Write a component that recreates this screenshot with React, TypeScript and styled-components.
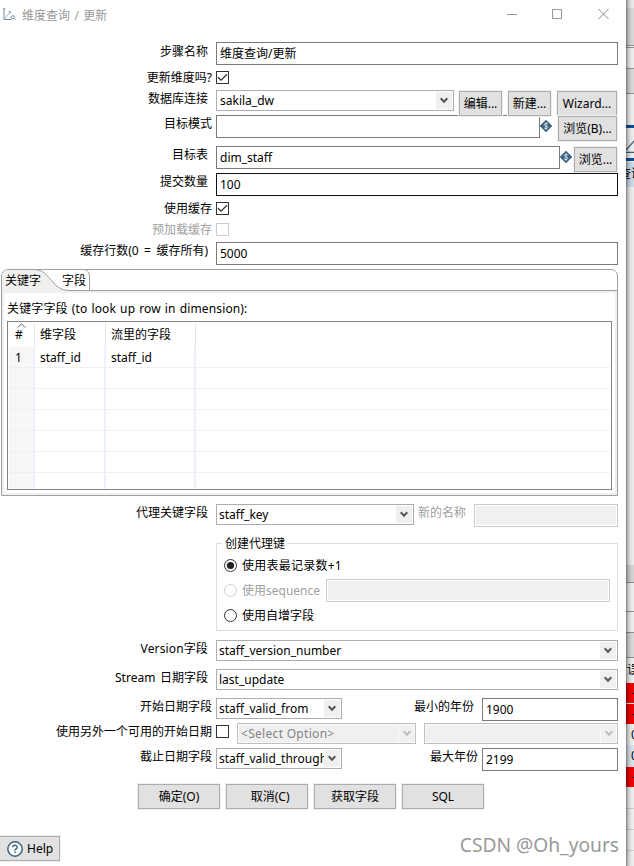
import React from "react";
import styled, { createGlobalStyle, css } from "styled-components";

const Global = createGlobalStyle`
  * { box-sizing: border-box; }
  body {
    margin: 0;
    background: #fff;
    overflow: hidden;
    font-family: "Noto Sans", "Noto Sans CJK SC", sans-serif;
    font-size: 12px;
    line-height: 16px;
    color: #000;
  }
`;

const Screen = styled.div`
  display: flex;
  width: 634px;
  height: 866px;
  overflow: hidden;
`;

const Dialog = styled.main`
  width: 626px;
  height: 866px;
  flex: none;
  background: #fff;
  position: relative;
`;

const TitleBar = styled.header`
  height: 42px;
  display: flex;
  align-items: flex-start;
  padding: 7px 17px 0 3px;
  color: #999;
  & > svg { flex: none; }
`;

const Title = styled.h1`
  flex: 1;
  margin: 1px 0 0 4px;
  font-size: 12px;
  font-weight: 400;
  word-spacing: 1.3px;
  white-space: pre;
`;

const WindowButtons = styled.div`
  display: flex;
  gap: 35px;
  padding-top: 1px;
`;

const Row = styled.div<{ $h: number }>`
  display: flex;
  align-items: flex-start;
  height: ${(p) => p.$h}px;
`;

const Label = styled.label<{ $end?: number; $top?: number; $muted?: boolean; $ls?: number; $ws?: number }>`
  flex: none;
  width: 216px;
  padding-right: ${(p) => 216 - (p.$end ?? 208)}px;
  margin-top: ${(p) => p.$top ?? 1}px;
  text-align: right;
  white-space: pre;
  letter-spacing: ${(p) => p.$ls ?? 0}px;
  word-spacing: ${(p) => p.$ws ?? 0}px;
  color: ${(p) => (p.$muted ? "#a0a0a0" : "#000")};
`;

const SideLabel = styled(Label)<{ $w: number }>`
  width: ${(p) => p.$w}px;
  padding-right: 0;
`;

const Field = styled.div<{ $w: number; $focus?: boolean; $off?: boolean; $ml?: number; $mt?: number }>`
  flex: none;
  width: ${(p) => p.$w}px;
  height: 23px;
  margin-left: ${(p) => p.$ml ?? 0}px;
  margin-top: ${(p) => p.$mt ?? 0}px;
  border: 1px solid ${(p) => (p.$focus ? "#111" : p.$off ? "#ccc" : "#7a7a7a")};
  padding: 3px 0 0 3px;
  white-space: pre;
  ${(p) => p.$off && css`
    background: #f0f0f0;
    box-shadow: inset 0 0 0 1px #fff;
  `}
`;

const ComboBox = styled.div<{ $w: number; $off?: boolean; $ml?: number; $pad?: number }>`
  flex: none;
  display: flex;
  width: ${(p) => p.$w}px;
  height: 21px;
  margin-left: ${(p) => p.$ml ?? 0}px;
  border: 1px solid ${(p) => (p.$off ? "#bfbfbf" : "#abadb3")};
  padding: 1px 1px 1px ${(p) => p.$pad ?? 2}px;
  color: ${(p) => (p.$off ? "#838383" : "#000")};
  background: ${(p) => (p.$off ? "#f0f0f0" : "#fff")};
  ${(p) => p.$off && css`box-shadow: inset 0 0 0 1px #fafafa;`}
`;

const ComboText = styled.span<{ $ls?: number }>`
  flex: 1;
  min-width: 0;
  overflow: hidden;
  white-space: pre;
  line-height: 18px;
  letter-spacing: ${(p) => p.$ls ?? 0}px;
`;

const ComboArrow = styled.span<{ $off?: boolean }>`
  flex: none;
  width: 16px;
  height: 17px;
  display: grid;
  place-items: center;
  background: #f0f0f0;
  ${(p) => p.$off && css`border-left: 1px solid #fafafa;`}
`;

const Button = styled.button<{ $w: number; $ml?: number; $mt?: number }>`
  flex: none;
  display: flex;
  align-items: center;
  justify-content: center;
  width: ${(p) => p.$w}px;
  height: 25px;
  margin: ${(p) => p.$mt ?? 0}px 0 0 ${(p) => p.$ml ?? 0}px;
  padding: 0;
  border: 1px solid #adadad;
  background: #e1e1e1;
  box-shadow: 0 0 0 1px #f0f0f0;
  font: inherit;
  color: #000;
  white-space: pre;
  position: relative;
`;

const Check = styled.span<{ $off?: boolean; $mt?: number }>`
  flex: none;
  width: 13px;
  height: 13px;
  margin-top: ${(p) => p.$mt ?? 0}px;
  border: 1px solid ${(p) => (p.$off ? "#ccc" : "#333")};
  svg { display: block; }
`;

const VariableMark = styled.span`
  flex: none;
  width: 12px;
  height: 12px;
  margin-top: 5px;
  svg { display: block; }
`;

const TabFolder = styled.section`
  width: 617px;
  height: 227px;
  margin-left: 1px;
  border: 1px solid #a0a0a0;
  border-radius: 7px 7px 0 0;
`;

const TabStrip = styled.div`
  display: flex;
  height: 21px;
  border-bottom: 1px solid #a0a0a0;
  position: relative;
`;

const TabShape = styled.svg`
  position: absolute;
  left: -1px;
  top: -1px;
`;

const Tab = styled.span<{ $w: number }>`
  position: relative;
  width: ${(p) => p.$w}px;
  padding: 3px 0 0 3px;
  white-space: pre;
`;

const TabBody = styled.div`
  height: 204px;
  border: solid #f0f0f0;
  border-width: 2px;
  padding: 8px 3px 0;
`;

const Caption = styled.div`
  height: 20px;
  white-space: pre;
  letter-spacing: 0.14px;
  word-spacing: 0.8px;
`;

const Table = styled.div`
  height: 169px;
  border: 1px solid #82838a;
  padding: 1px;
  overflow: hidden;
`;

const TableRow = styled.div<{ $head?: boolean }>`
  display: grid;
  grid-template-columns: 26px 71px 90px 1fr;
  height: ${(p) => (p.$head ? 24 : 21)}px;
  border-bottom: ${(p) => (p.$head ? 0 : 1)}px solid #f0f0f0;
  & > span {
    position: relative;
    padding: ${(p) => (p.$head ? 4 : 3)}px 0 0 5px;
    border-right: ${(p) => (p.$head ? "1px solid #e5e5e5" : "2px solid #ebf1fd")};
    white-space: pre;
  }
  & > span:first-child {
    padding-left: 6px;
    background: ${(p) => (p.$head ? "#fff" : "#f7f7f7")};
  }
  & > span:last-child { border-right: 0; }
`;

const SortMark = styled.svg`
  position: absolute;
  left: 8px;
  top: 0;
`;

const Group = styled.fieldset`
  width: 402px;
  height: 96px;
  margin: 0 0 0 216px;
  padding: 0;
  border: 0;
  display: flex;
  flex-direction: column;
  position: relative;
  &::before {
    content: "";
    position: absolute;
    inset: 7px 0 1px 0;
    border: 1px solid #dcdcdc;
  }
`;

const Legend = styled.div`
  position: relative;
  flex: none;
  width: 64px;
  height: 22px;
  margin-left: 6px;
`;

const LegendText = styled.span`
  display: block;
  width: 65px;
  height: 16px;
  padding-left: 3px;
  white-space: nowrap;
  background: #fff;
`;

const RadioRow = styled.div<{ $off?: boolean }>`
  position: relative;
  display: flex;
  flex: none;
  align-items: flex-start;
  height: 25px;
  padding: 0 0 0 8px;
  color: ${(p) => (p.$off ? "#a0a0a0" : "#000")};
  & > svg { margin-top: 1px; flex: none; }
`;

const RadioText = styled.span<{ $w: number; $ls?: number }>`
  flex: none;
  width: ${(p) => p.$w}px;
  margin-left: 5px;
  white-space: pre;
  letter-spacing: ${(p) => p.$ls ?? 0}px;
`;

const Actions = styled.div`
  display: flex;
  gap: 6px;
  padding: 0 0 0 138px;
  height: 52px;
`;

const HelpButton = styled(Button)`
  justify-content: flex-start;
  gap: 4px;
  padding-left: 7px;
`;

const Watermark = styled.div`
  position: absolute;
  right: 7px;
  top: 832px;
  font-size: 19.2px;
  line-height: 26px;
  color: #999;
  white-space: pre;
`;

const Backdrop = styled.aside`
  width: 8px;
  height: 866px;
  position: relative;
  overflow: hidden;
  &::after {
    content: "";
    position: absolute;
    inset: 0;
    background: linear-gradient(90deg, rgba(0,0,0,.5) 0, rgba(0,0,0,.3) 1.5px, rgba(0,0,0,.13) 4px, rgba(0,0,0,.05) 8px);
  }
`;

const Band = styled.div<{ $h: number; $c: string }>`
  height: ${(p) => p.$h}px;
  background: ${(p) => p.$c};
  overflow: hidden;
  white-space: nowrap;
  line-height: ${(p) => Math.min(p.$h, 24)}px;
  svg { display: block; }
`;

const Peek = styled.span<{ $shift: number }>`
  display: block;
  margin-left: ${(p) => p.$shift}px;
`;

const Chevron = ({ off }: { off?: boolean }) => (
  <svg width="8" height="7" viewBox="0 0 8 7">
    <path d="M0.7 1.3 L4 4.8 L7.3 1.3" fill="none" stroke={off ? "#bbb" : "#555"} strokeWidth="2" />
  </svg>
);

const Combo = ({ w, text = "", off, ml, pad, ls }: { w: number; text?: string; off?: boolean; ml?: number; pad?: number; ls?: number }) => (
  <ComboBox $w={w} $off={off} $ml={ml} $pad={pad}>
    <ComboText $ls={ls}>{text}</ComboText>
    <ComboArrow $off={off}><Chevron off={off} /></ComboArrow>
  </ComboBox>
);

const CheckBox = ({ on, off, mt }: { on?: boolean; off?: boolean; mt?: number }) => (
  <Check $off={off} $mt={mt}>
    {on && (
      <svg width="11" height="11" viewBox="0 0 11 11">
        <path d="M1 5.2 L4 8.2 L10 2.2" fill="none" stroke="#333" strokeWidth="1.3" />
      </svg>
    )}
  </Check>
);

const Radio = ({ on, off }: { on?: boolean; off?: boolean }) => (
  <svg width="13" height="13" viewBox="0 0 13 13">
    <circle cx="6.5" cy="6.5" r="6" fill="#fff" stroke={off ? "#ccc" : "#333"} />
    {on && <circle cx="6.5" cy="6.5" r="3.6" fill="#222" />}
  </svg>
);

const Variable = () => (
  <VariableMark>
    <svg width="12" height="12" viewBox="0 0 12 12">
      <path d="M6 0 L12 6 L6 12 L0 6 Z" fill="#3d6480" stroke="#3d6480" strokeWidth="0.6" />
      <path d="M7.9 4.2 C7.3 3.1 4.3 3 4.3 4.6 C4.3 6.2 7.8 5.5 7.8 7.3 C7.8 8.9 4.6 8.9 4 7.6 M6 2.2 V9.8" fill="none" stroke="#dfe8ee" strokeWidth="0.9" />
    </svg>
  </VariableMark>
);

const bands: [number, string, string?, number?][] = [
  [8, "#fafafa"], [37, "#e8e8e8"], [1, "#a0a0a0"], [1, "#fff"], [1, "#a0a0a0"],
  [20, "#fff"], [1, "#a0a0a0"], [24, "#e8e8e8"], [1, "#a0a0a0"], [31, "#fff"], [3, "#0a559c"], [12, "#fff"],
];

const lowerBands: [number, string, string?, number?][] = [
  [5, "#fff"], [3, "#0a559c"], [1, "#fff"], [25, "#dbe9f7", "查询", -7],
  [378, "#fdfdfd"], [17, "#e2e2e2"], [1, "#999"], [28, "#fff"], [1, "#999"], [20, "#fff"], [1, "#999"],
  [24, "#e8e8e8"], [1, "#999"], [25, "#fff", "错误", -11], [20, "#f00", "-", 5], [1, "#fff"], [20, "#f00", "-", 5],
  [21, "#fff", "0", 5], [22, "#e8f2fc", "0", 5], [20, "#f00", "-", 5],
  [21, "#fff"], [1, "#ddd"], [20, "#fff"], [1, "#ddd"], [20, "#fff"], [1, "#ddd"], [20, "#fff"],
];

const Bands = ({ items }: { items: [number, string, string?, number?][] }) => (
  <>
    {items.map(([h, c, text, shift], i) => (
      <Band key={i} $h={h} $c={c}>{text && <Peek $shift={shift ?? 0}>{text}</Peek>}</Band>
    ))}
  </>
);

export default function App() {
  return (
    <Screen>
      <Global />
      <Dialog>
        <TitleBar>
          <svg width="15" height="15" viewBox="0 0 15 15" fill="none" stroke="#8195a8">
            <path d="M1 1 V12.5 H8.500" strokeWidth="1.1" />
            <path d="M1 12.5 L7 5" stroke="#9fb0bf" />
            <path d="M0 2.500 L1 1 L2.500 2.500 M5.500 4.500 H7.500 V6.500" strokeWidth="0.8" />
            <circle cx="9.800" cy="10.200" r="1.6" />
            <path d="M11 11.400 L12.500 13" />
          </svg>
          <Title>维度查询 / 更新</Title>
          <WindowButtons>
            <svg width="11" height="11"><path d="M1 6.5 H11" stroke="#999" /></svg>
            <svg width="11" height="11"><rect x="0.5" y="1.5" width="9" height="9" fill="none" stroke="#999" /></svg>
            <svg width="11" height="11"><path d="M0.5 1 L10.5 11 M10.5 1 L0.5 11" stroke="#888" /></svg>
          </WindowButtons>
        </TitleBar>

        <Row $h={29}><Label $top={2}>步骤名称</Label><Field $w={402}>维度查询/更新</Field></Row>
        <Row $h={19}><Label $end={212} $top={-1}>更新维度吗?</Label><CheckBox on /></Row>
        <Row $h={25}>
          <Label $top={1}>数据库连接</Label>
          <Combo w={238} text="sakila_dw" pad={3} />
          <Button $w={43} $ml={5} $mt={1}>编辑...</Button>
          <Button $w={43} $ml={6} $mt={1}>新建...</Button>
          <Button $w={60} $ml={6} $mt={1}>Wizard...</Button>
        </Row>
        <Row $h={31}>
          <Label $end={212} $top={1}>目标模式</Label><Field $w={324} /><Variable />
          <Button $w={59} $ml={6} $mt={1}>浏览(B)...</Button>
        </Row>
        <Row $h={27}>
          <Label>目标表</Label><Field $w={344}>dim_staff</Field><Variable />
          <Button $w={43} $ml={2} $mt={1}>浏览...</Button>
        </Row>
        <Row $h={29}><Label>提交数量</Label><Field $w={402} $focus>100</Field></Row>
        <Row $h={21}><Label $end={212} $top={-1}>使用缓存</Label><CheckBox on /></Row>
        <Row $h={19}><Label $end={212} $top={-1} $muted>预加载缓存</Label><CheckBox off /></Row>
        <Row $h={27}><Label $ws={2.3}>缓存行数(0 = 缓存所有)</Label><Field $w={402}>5000</Field></Row>

        <TabFolder>
          <TabStrip>
            <TabShape width="92" height="24" viewBox="0 0 92 24" fill="none" stroke="#a0a0a0">
              <path d="M1 24 V7 Q1.5 1 8 1 H34 C50 1 50 21.5 68 21.5 V24 Z" fill="#f0f0f0" stroke="none" />
              <path d="M34 0.5 C50 1 50 21.5 68 21.5 M83 0.5 Q88.500 1 88.500 8 V21.500" />
            </TabShape>
            <Tab $w={57}>关键字</Tab>
            <Tab $w={35}>字段</Tab>
          </TabStrip>
          <TabBody>
            <Caption>关键字字段 (to look up row in dimension):</Caption>
            <Table>
              <TableRow $head>
                <span><SortMark width="9" height="5"><path d="M0.500 4.500 L4.500 1 L8.500 4.500" fill="none" stroke="#666" /></SortMark>#</span>
                <span>维字段</span><span>流里的字段</span><span />
              </TableRow>
              <TableRow><span>1</span><span>staff_id</span><span>staff_id</span><span /></TableRow>
              {[0, 1, 2, 3, 4, 5].map((i) => (
                <TableRow key={i}><span /><span /><span /><span /></TableRow>
              ))}
            </Table>
          </TabBody>
        </TabFolder>

        <Row $h={8} />
        <Row $h={32}>
          <Label $top={1}>代理关键字段</Label><Combo w={198} text="staff_key" />
          <SideLabel $w={52} $top={1} $muted>新的名称</SideLabel><Field $w={144} $ml={8} $off />
        </Row>

        <Group>
          <Legend><LegendText>创建代理键</LegendText></Legend>
          <RadioRow><Radio on /><RadioText $w={150} $ls={0.25}>使用表最记录数+1</RadioText></RadioRow>
          <RadioRow $off>
            <Radio off /><RadioText $w={84}>使用sequence</RadioText>
            <Field $w={284} $off $mt={-4} />
          </RadioRow>
          <RadioRow><Radio /><RadioText $w={150}>使用自增字段</RadioText></RadioRow>
        </Group>

        <Row $h={8} />
        <Row $h={29}><Label $ls={0.14}>Version字段</Label><Combo w={402} text="staff_version_number" /></Row>
        <Row $h={29}><Label $ws={1.5}>Stream 日期字段</Label><Combo w={402} text="last_update" /></Row>
        <Row $h={25}>
          <Label $end={212}>开始日期字段</Label><Combo w={126} text="staff_valid_from" />
          <SideLabel $w={132}>最小的年份</SideLabel><Field $w={136} $ml={8}>1900</Field>
        </Row>
        <Row $h={25}>
          <Label $end={212}>使用另外一个可用的开始日期</Label><CheckBox mt={2} />
          <Combo w={179} ml={8} off text="<Select Option>" pad={3} ls={0.3} /><Combo w={194} ml={8} off />
        </Row>
        <Row $h={36}>
          <Label $end={212}>截止日期字段</Label><Combo w={126} text="staff_valid_through" />
          <SideLabel $w={136}>最大年份</SideLabel><Field $w={136} $ml={4}>2199</Field>
        </Row>

        <Actions>
          <Button $w={82}>确定(O)</Button>
          <Button $w={82}>{"  取消(C)"}</Button>
          <Button $w={82}>获取字段</Button>
          <Button $w={82}>SQL</Button>
        </Actions>

        <HelpButton $w={61} $ml={-1}>
          <svg width="16" height="16" viewBox="0 0 16 16" fill="none" stroke="#3d6480">
            <circle cx="8" cy="8" r="7.200" strokeWidth="1.5" fill="#fff" />
            <path d="M5.800 6.300 C5.800 3.600 10.200 3.600 10.200 6.200 C10.200 7.900 8 7.700 8 9.400 M8 10.500 V12" strokeWidth="1.500" />
          </svg>
          Help
        </HelpButton>
        <Watermark>CSDN @Oh_yours</Watermark>
      </Dialog>

      <Backdrop>
        <Bands items={bands} />
        <Band $h={13} $c="#fff">
          <svg width="8" height="13"><path d="M0 10 L9 0 M0 12.500 H8" stroke="#3d6480" strokeWidth="1.300" /></svg>
        </Band>
        <Bands items={lowerBands} />
      </Backdrop>
    </Screen>
  );
}
